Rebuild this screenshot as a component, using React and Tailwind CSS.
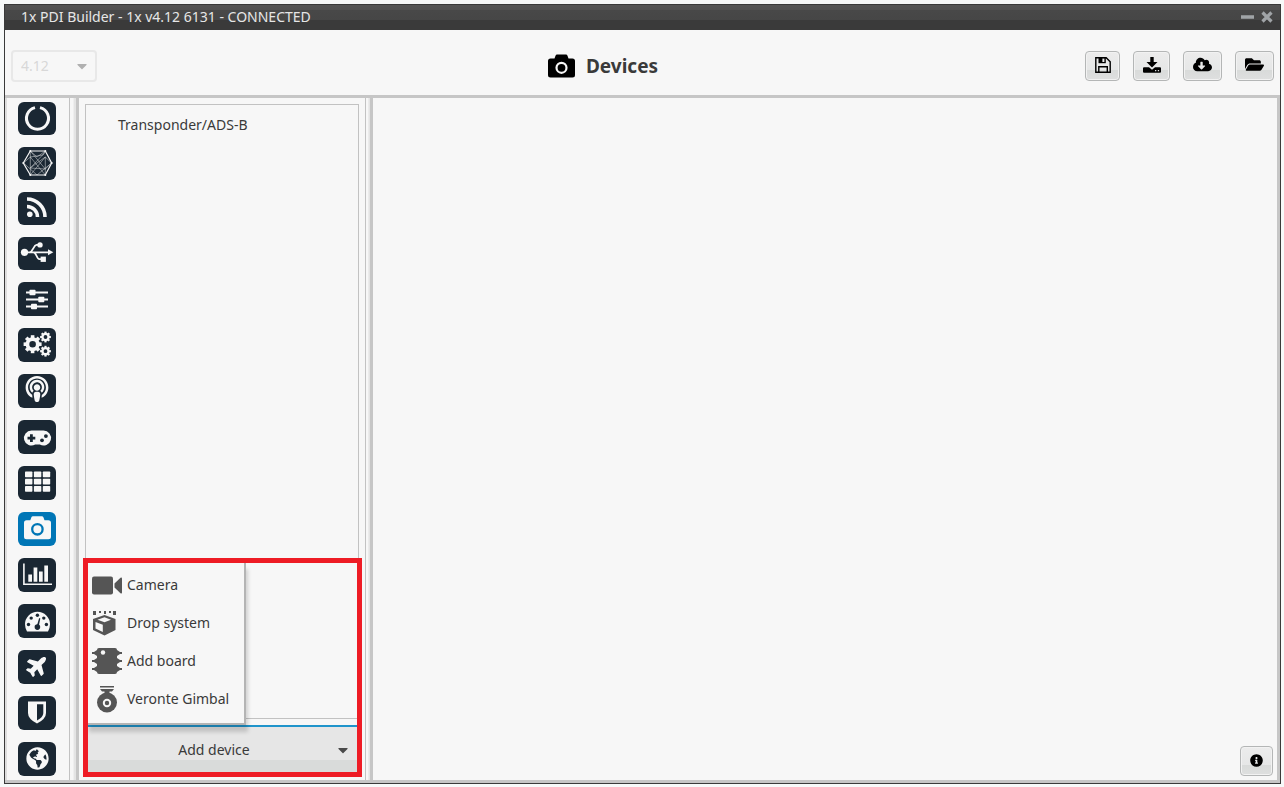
import { useState } from 'react';
import {
  FaCaretDown,
  FaCloudDownloadAlt,
  FaFolderOpen,
  FaGlobeAmericas,
  FaInfoCircle,
  FaPlane,
  FaPodcast,
} from 'react-icons/fa';

const INK = '#1a2733';

// Sidebar glyphs share one canvas, the size of a tile
function Glyph({ children }) {
  return (
    <svg viewBox="0 0 38 33" className="w-[38px] h-[33px]" fill="currentColor" aria-hidden="true">
      {children}
    </svg>
  );
}

function Gear({ cx, cy, r, hole, teeth = 8 }) {
  return (
    <g transform={`translate(${cx} ${cy})`}>
      <circle r={(r * 0.78 + hole) / 2} fill="none" stroke="currentColor" strokeWidth={r * 0.78 - hole} />
      {Array.from({ length: teeth }, (_, i) => (
        <rect
          key={i}
          x={-r * 0.2}
          y={-r}
          width={r * 0.4}
          height={r * 0.35}
          transform={`rotate(${(i * 360) / teeth})`}
        />
      ))}
    </g>
  );
}

function RingIcon() {
  return (
    <Glyph>
      <path d="M17 5.6A11 11 0 1 0 22 5.6" fill="none" stroke="currentColor" strokeWidth="3" />
    </Glyph>
  );
}

function MeshIcon() {
  return (
    <Glyph>
      <g fill="none" stroke="currentColor">
        <path d="M12.3 4L19 10L27.3 4L25 8L12.3 10L27.3 28L27.3 10L12.3 28V4L27.3 22L12.3 21L27.3 5M5.5 16L12.3 10M5.5 16L19 28L33.5 16L27.3 22M12.3 21L19 16L27.3 10L33.5 16" strokeWidth="0.6" opacity="0.75" />
        <path d="M5.3 16L12.3 4H27.3L33.7 16L27.3 28H12.3Z" strokeWidth="1.2" />
      </g>
      {[[5.3, 16], [12.3, 4], [27.3, 4], [33.7, 16], [27.3, 28], [12.3, 28]].map(([x, y]) => (
        <circle key={`${x}-${y}`} cx={x} cy={y} r="1" />
      ))}
    </Glyph>
  );
}

function FeedIcon() {
  return (
    <Glyph>
      <circle cx="11.8" cy="22.3" r="2.8" />
      <path d="M9 14.5A10.5 10.5 0 0 1 19.5 25M9 7A18 18 0 0 1 27 25" fill="none" stroke="currentColor" strokeWidth="3.6" />
    </Glyph>
  );
}

function UsbIcon() {
  return (
    <Glyph>
      <circle cx="6.5" cy="15.3" r="3.6" />
      <circle cx="22" cy="7.9" r="2.7" />
      <rect x="22.6" y="19.6" width="5.3" height="5.3" />
      <path d="M30 12.3L35.3 15.3L30 18.3Z" />
      <path d="M7 15.3H31M11.5 15.3C15 15 15.5 8.2 18.5 7.9H21M15.5 15.3C18.5 15.5 18.5 22 21.5 22.2H23.5" fill="none" stroke="currentColor" strokeWidth="1.8" />
    </Glyph>
  );
}

function SlidersIcon() {
  return (
    <Glyph>
      <path d="M8 9.5H30M8 16.5H30M8 23.5H30" stroke="currentColor" strokeWidth="1.8" />
      <rect x="11.5" y="6.7" width="6" height="5.6" rx="0.8" />
      <rect x="20.3" y="13.700" width="6" height="5.6" rx="0.8" />
      <rect x="13" y="20.700" width="6" height="5.6" rx="0.8" />
    </Glyph>
  );
}

function GearsIcon() {
  return (
    <Glyph>
      <Gear cx={14.6} cy={15.2} r={9} hole={3.3} />
      <Gear cx={27.5} cy={8} r={5.4} hole={1.9} />
      <Gear cx={27.5} cy={22.2} r={5.4} hole={1.9} />
    </Glyph>
  );
}

function GamepadIcon() {
  return (
    <Glyph>
      <path d="M13.5 9.500H25.5A7.5 7.5 0 1 1 21.8 23.500H17.2A7.5 7.5 0 1 1 13.5 9.500Z" />
      <g fill={INK}>
        <path d="M12 13.3H14.8V15.8H17.3V18.5H14.8V21H12V18.5H9.5V15.8H12Z" />
        <circle cx="24" cy="19.3" r="1.9" />
        <circle cx="27.9" cy="15.1" r="1.9" />
      </g>
    </Glyph>
  );
}

function GridIcon() {
  return (
    <Glyph>
      {[4.5, 11.800, 19.1].map((y) =>
        [7, 15.9, 24.8].map((x) => <rect key={`${x}-${y}`} x={x} y={y} width="7.4" height="5.7" rx="0.7" />),
      )}
    </Glyph>
  );
}

function CameraTileIcon() {
  return (
    <Glyph>
      <path d="M8.5 7.2H12.3L13.4 4.3Q13.8 3.2 15 3.2H23.8Q25 3.2 25.4 4.3L26.5 7.2H30.3Q33 7.2 33 9.7V23.7Q33 26.2 30.3 26.2H8.5Q6 26.2 6 23.7V9.7Q6 7.2 8.5 7.2Z" />
      <circle cx="19.4" cy="16.3" r="5.2" fill="none" stroke="#0076b6" strokeWidth="2.3" />
    </Glyph>
  );
}

function BarsIcon() {
  return (
    <Glyph>
      <path d="M5.9 4.500V25.2H34" fill="none" stroke="currentColor" strokeWidth="1.6" />
      <path d="M10.3 15.5H14V22.7H10.3ZM15.6 8.5H19.3V22.7H15.6ZM21 12.5H24.7V22.7H21ZM26.3 6.5H30V22.7H26.3Z" />
    </Glyph>
  );
}

function GaugeIcon() {
  return (
    <Glyph>
      <path d="M9 26.500Q7 23 7 19.300A12.500 12.500 0 0 1 32 19.300Q32 23 30 26.500Z" />
      <g fill={INK}>
        <circle cx="10.5" cy="19.5" r="1.7" />
        <circle cx="13.2" cy="13.1" r="1.7" />
        <circle cx="19.4" cy="10.3" r="1.7" />
        <circle cx="25.8" cy="13.1" r="1.7" />
        <circle cx="28.4" cy="19.5" r="1.7" />
        <circle cx="19.4" cy="22.1" r="2.8" />
        <path d="M18.6 21.5L21.2 13.1L22.3 13.4L20.6 22Z" />
      </g>
    </Glyph>
  );
}

function ShieldIcon() {
  return (
    <Glyph>
      <path d="M10 4.500H28V16Q28 22 19 26.500Q10 22 10 16Z" />
      <path d="M19 7.300H25.300V16Q25.300 20 19 23.500Z" fill={INK} />
    </Glyph>
  );
}

const TOOLS = [
  { id: 'Veronte', icon: <RingIcon /> },
  { id: 'Connections mesh', icon: <MeshIcon /> },
  { id: 'Telemetry', icon: <FeedIcon /> },
  { id: 'Connections', icon: <UsbIcon /> },
  { id: 'Variables', icon: <SlidersIcon /> },
  { id: 'Control', icon: <GearsIcon /> },
  { id: 'Communications', icon: <FaPodcast className="w-6 h-[26px] mb-1" /> },
  { id: 'Stick', icon: <GamepadIcon /> },
  { id: 'Blocks', icon: <GridIcon /> },
  { id: 'Devices', icon: <CameraTileIcon /> },
  { id: 'Charts', icon: <BarsIcon /> },
  { id: 'Gauges', icon: <GaugeIcon /> },
  { id: 'Platform', icon: <FaPlane className="w-[23px] h-[23px] mb-1 -rotate-45" /> },
  { id: 'Safety', icon: <ShieldIcon /> },
  { id: 'World', icon: <FaGlobeAmericas className="w-[23px] h-[23px] mb-0.5" /> },
];

function SaveIcon() {
  return (
    <svg viewBox="0 0 16 16" className="w-4 h-4" fill="none" stroke="currentColor" strokeWidth="1.4" aria-hidden="true">
      <path d="M.8.8H11.200L15.200 4.800V15.200H.8Z" />
      <path d="M3.800 15V9.800H12.300V15" />
      <path d="M3.500 .8H10.800V6.200H3.500Z" fill="currentColor" stroke="none" />
      <path d="M7.400 1.600H9.400V5H7.400Z" fill="#e8e9e9" stroke="none" />
    </svg>
  );
}

function DownloadIcon() {
  return (
    <svg viewBox="0 0 18 16" className="w-[18px] h-4" fill="currentColor" aria-hidden="true">
      <path d="M7.300 0H10.700V5H14.500L9 10.600L3.500 5H7.300Z" />
      <path d="M1 10.300H6L9 12.800L12 10.300H17Q18 10.300 18 11.300V14.700Q18 15.700 17 15.700H1Q0 15.700 0 14.700V11.300Q0 10.300 1 10.300Z" />
      <path d="M12 13H13.300V14.200H12ZM14.800 13H16.100V14.200H14.800Z" fill="#d9dbda" />
    </svg>
  );
}

const ACTIONS = [
  { label: 'Save', width: 'w-[35px]', icon: <SaveIcon /> },
  { label: 'Save to disk', width: 'w-[37px]', icon: <DownloadIcon /> },
  { label: 'Import from repository', width: 'w-[39px]', icon: <FaCloudDownloadAlt className="w-[19px] h-[17px]" /> },
  { label: 'Open', width: 'w-[39px]', icon: <FaFolderOpen className="w-[19px] h-[17px]" /> },
];

function PushButton({ label, width, children }) {
  return (
    <button
      type="button"
      aria-label={label}
      className={`${width} h-[30px] flex items-center justify-center rounded-[4px] border border-[#b4b6b6] shadow-[inset_0_0_0_1px_#f2f2f2] bg-[linear-gradient(#ececec_0%,#e6e7e7_65%,#d9dbda_66%,#dedfdf_100%)] pb-0.5 text-black`}
    >
      {children}
    </button>
  );
}

function VideoIcon() {
  return (
    <svg viewBox="0 0 30 20" className="w-[30px] h-5" fill="currentColor" aria-hidden="true">
      <rect x="0" y="1.500" width="21" height="18" rx="2" />
      <path d="M22.500 8.500L28.500 2.800Q30 2 30 3.500V17.500Q30 19 28.500 18.200L22.500 12.500Z" />
    </svg>
  );
}

function DropIcon() {
  return (
    <svg viewBox="0 0 26 26" className="w-[26px] h-[26px]" fill="currentColor" aria-hidden="true">
      <path d="M1 1H4V5H1ZM7 1H9V3H7ZM12 1H14V4H12ZM17 1H19V3H17ZM21 1H24V5H21Z" />
      <path d="M12.500 5L23.500 9V20L12.500 25.500L1 20V9Z" />
      <path d="M12.500 7.300L19 9.800L12.500 12.200L5.500 9.800Z" fill="#f7f7f7" />
      <path d="M3.500 12L10.800 14.800V22L3.500 18.500Z" fill="#f7f7f7" />
    </svg>
  );
}

function BoardIcon() {
  return (
    <svg viewBox="0 0 30 28" className="w-[30px] h-7" fill="currentColor" aria-hidden="true">
      <rect x="5" y="1" width="20" height="26" rx="2" />
      {[5, 13, 21].map((y) => (
        <g key={y}>
          <path d={`M0 ${y}H2L5 ${y - 2}V${y + 4}L2 ${y + 2}H0Z`} />
          <path d={`M30 ${y}H28L25 ${y - 2}V${y + 4}L28 ${y + 2}H30Z`} />
        </g>
      ))}
      <circle cx="11" cy="5.500" r="2.200" fill="#f7f7f7" />
    </svg>
  );
}

function GimbalIcon() {
  return (
    <svg viewBox="0 0 22 28" className="w-[22px] h-7 ml-1" fill="currentColor" aria-hidden="true">
      <path d="M4 1H18V2.500H4ZM4 4H18L16 6.500H13.500V9H8.500V6.500H6Z" />
      <circle cx="11" cy="17.500" r="10" />
      <circle cx="11" cy="18" r="3.200" fill="none" stroke="#f7f7f7" strokeWidth="2" />
    </svg>
  );
}

const DEVICE_TYPES = [
  { name: 'Camera', icon: <VideoIcon /> },
  { name: 'Drop system', icon: <DropIcon /> },
  { name: 'Add board', icon: <BoardIcon /> },
  { name: 'Veronte Gimbal', icon: <GimbalIcon /> },
];

function Splitter({ width }) {
  return <div className={`${width} flex-shrink-0 border-l border-[#c2c2c2] border-r-3 border-r-[#c6c6c6] bg-[linear-gradient(90deg,#f7f7f7_50%,#e4e4e4_70%)]`} />;
}

function DevicePanel() {
  const [open, setOpen] = useState(true);

  return (
    <section className="relative w-[286px] flex-shrink-0 flex flex-col px-[6px] pt-1.5 pb-1">
      <ul className="flex-1 border border-[#c2c2c2] pt-2">
        <li className="pl-8 py-0.5 leading-5">Transponder/ADS-B</li>
      </ul>
      <button
        type="button"
        aria-haspopup="menu"
        aria-expanded={open}
        onClick={() => setOpen(!open)}
        className="mt-1.5 h-[51px] flex items-center border-t-2 border-[#1f94cb] bg-[linear-gradient(#e6e6e6_67%,#d9dbda_67%)] pl-2 pr-2 pb-1"
      >
        <span className="flex-1">Add device</span>
        <FaCaretDown className="w-4 h-4 text-[#4a4a4a]" />
      </button>

      {open && (
        <div
          role="menu"
          className="absolute left-2 bottom-[55px] w-[159px] pt-1 pb-[5px] border-r-2 border-b-2 border-[#b4b4b4] bg-[#f7f7f7] shadow-[2px_7px_4px_rgba(0,0,0,0.16)]"
        >
          {DEVICE_TYPES.map((d) => (
            <button
              key={d.name}
              type="button"
              role="menuitem"
              className="w-full h-[38px] flex items-center gap-[5px] pl-[5px] whitespace-nowrap"
            >
              <span className="w-[30px] flex-shrink-0 text-[#555]">{d.icon}</span>
              {d.name}
            </button>
          ))}
        </div>
      )}

      {/* Highlight frame round the add-device area */}
      <div className="absolute left-1 right-[3px] bottom-[3px] h-[219px] border-5 border-[#ee1c25] pointer-events-none" />
    </section>
  );
}

export default function App() {
  const [active, setActive] = useState('Devices');

  return (
    <div className="min-h-screen flex flex-col bg-[#f7f9f9] pt-1 pl-1 pr-[3px] pb-[3px] font-['Noto_Sans','Open_Sans',sans-serif] text-sm text-[#3a3a3a]">
      <div className="flex-1 flex flex-col border border-[#3a3a3a] bg-[#f7f7f7]">
        {/* Title bar */}
        <header className="h-[25px] flex items-center justify-between pl-4 pr-[7px] pb-0.5 bg-[linear-gradient(#555_0%,#525252_20%,#484848_20%,#464646_60%,#3a3a3a_60%)] text-[#e6e6e6]">
          <span>1x PDI Builder - 1x v4.12 6131 - CONNECTED</span>
          <div className="flex items-center gap-[7px] text-[#a0a4a7]">
            <button type="button" aria-label="Minimize">
              <svg viewBox="0 0 13 12" className="w-[13px] h-3" aria-hidden="true">
                <path d="M0 6H13" stroke="currentColor" strokeWidth="3.500" />
              </svg>
            </button>
            <button type="button" aria-label="Close">
              <svg viewBox="0 0 12 12" className="w-3 h-3" aria-hidden="true">
                <path d="M1.500 1.500L10.500 10.500M10.500 1.500L1.500 10.500" stroke="currentColor" strokeWidth="3.200" />
              </svg>
            </button>
          </div>
        </header>

        {/* Toolbar */}
        <div className="h-[68px] flex items-center pt-1.5 px-1.5 border-b-3 border-[#c6c6c6]">
          <div className="relative">
            <select
              aria-label="Version"
              disabled
              className="w-[86px] h-8 appearance-none rounded-[4px] border-2 border-[#e8e8e8] pl-2 text-[#d8d8d8] opacity-100"
            >
              <option>4.12</option>
            </select>
            <FaCaretDown className="absolute right-[7px] top-2 w-4 h-4 text-[#b0b0b0] pointer-events-none" />
          </div>
          <h1 className="flex-1 flex items-center justify-center gap-[11px] pl-6 text-[19px] leading-6 font-bold">
            <svg viewBox="0 0 27 24" className="w-[27px] h-6 text-black" fill="currentColor" aria-hidden="true">
              <path d="M2.500 4.500H6.500L7.500 1.700Q8 .5 9 .5H18Q19 .5 19.500 1.700L20.500 4.500H24.500Q27 4.500 27 7V21Q27 23.500 24.500 23.500H2.500Q0 23.500 0 21V7Q0 4.500 2.500 4.500Z" />
              <circle cx="13.500" cy="13.800" r="5" fill="none" stroke="#f7f7f7" strokeWidth="2.200" />
            </svg>
            Devices
          </h1>
          <div className="flex gap-[13px]">
            {ACTIONS.map((a) => (
              <PushButton key={a.label} label={a.label} width={a.width}>{a.icon}</PushButton>
            ))}
          </div>
        </div>

        <div className="flex-1 flex border-b-3 border-[#c6c6c6]">
          {/* Section shortcuts */}
          <nav className="w-16 flex-shrink-0 flex flex-col items-center gap-3 pt-1 pb-1 pr-0.5 border-l-2 border-[#dedede]">
            {TOOLS.map((t, i) => (
              <button
                key={t.id}
                type="button"
                aria-label={t.id}
                onClick={() => setActive(t.id)}
                className={`w-[38px] flex items-center justify-center rounded-md text-[#f7f7f7] ${i < 4 ? 'h-[33px]' : 'h-[34px]'}
                  ${active === t.id ? 'bg-[#0076b6]' : 'bg-[#1a2733]'}`}
              >
                {t.icon}
              </button>
            ))}
          </nav>
          <Splitter width="w-[10px]" />
          <DevicePanel />
          <Splitter width="w-2" />
          <main className="flex-1 flex items-end justify-end p-1 border-r-3 border-[#c6c6c6]">
            <PushButton label="Information" width="w-[33px]">
              <FaInfoCircle className="w-[13px] h-[13px]" />
            </PushButton>
          </main>
        </div>
      </div>
    </div>
  );
}
